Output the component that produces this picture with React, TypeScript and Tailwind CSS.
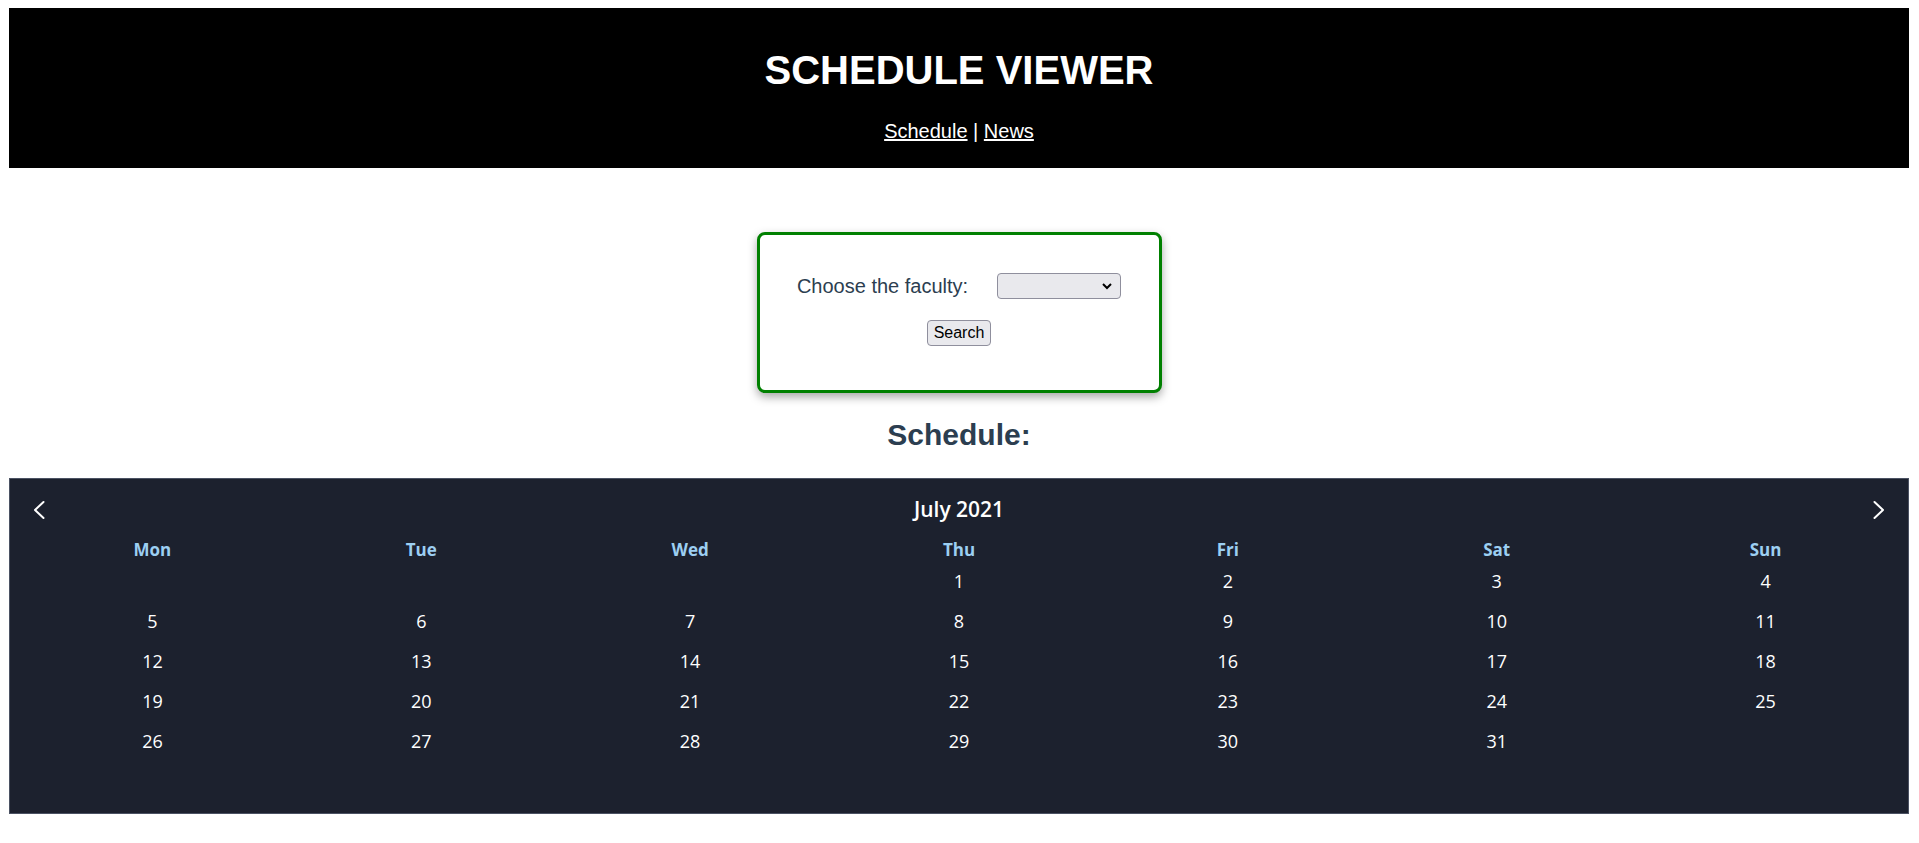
import React from "react"

const days = ["Mon", "Tue", "Wed", "Thu", "Fri", "Sat", "Sun"]

// July 2021 starts on a Thursday
const cells: (number | null)[] = [
  null, null, null,
  ...Array.from({ length: 31 }, (_, i) => i + 1),
]
while (cells.length < 42) cells.push(null)

function Chevron({ dir }: { dir: "left" | "right" }) {
  return (
    <svg width="14" height="20" viewBox="0 0 14 20" fill="none">
      <polyline
        points={dir === "left" ? "11.5,2 3,10 11.5,18" : "2.5,2 11,10 2.5,18"}
        stroke="white"
        strokeWidth="2"
        strokeLinecap="round"
        strokeLinejoin="round"
      />
    </svg>
  )
}

export default function App() {
  return (
    <div className="min-h-[843px] bg-white pt-[8px] pl-[9px] pr-[10px] font-['Liberation_Sans',Arial,sans-serif]">
      {/* Header */}
      <header className="h-[160px] bg-black flex flex-col items-center pt-[39px] text-white">
        <h1 className="text-[40px] leading-[46px] font-bold">SCHEDULE VIEWER</h1>
        <nav className="mt-[27px] text-[20px] leading-[23px]">
          <a href="#" className="underline">Schedule</a>
          <span> | </span>
          <a href="#" className="underline">News</a>
        </nav>
      </header>

      {/* Search form */}
      <div className="flex justify-center mt-[64px]">
        <div className="w-[405px] border-[3px] border-[#008000] rounded-[8px] bg-white shadow-[0_4px_10px_rgba(0,0,0,0.35)] pt-[38px] pb-[44px] flex flex-col items-center">
          <div className="h-[26px] flex items-center gap-[29px]">
            <label className="text-[20px] text-[#2c3e50]">Choose the faculty:</label>
            <div className="relative w-[124px] h-[26px]">
              <select className="appearance-none w-full h-full bg-[#e9e9ed] border border-[#8f8f9d] rounded-[4px]" />
              <svg className="absolute right-[8px] top-[9px] pointer-events-none" width="12" height="8" viewBox="0 0 12 8" fill="none">
                <polyline points="2,2 6,6 10,2" stroke="black" strokeWidth="2" />
              </svg>
            </div>
          </div>
          <button className="mt-[21px] h-[26px] px-[6px] bg-[#e9e9ed] border border-[#8f8f9d] rounded-[4px] text-[16px] text-black leading-none">
            Search
          </button>
        </div>
      </div>

      <h2 className="mt-[25px] text-center text-[30px] leading-[34px] font-bold text-[#2c3e50]">Schedule:</h2>

      {/* Calendar */}
      <div className="mt-[26px] bg-[#1c212e] border border-[#4b5263] pt-[15px] pb-[12px] px-[8px] font-['Open_Sans',sans-serif] text-white">
        <div className="h-[32px] flex items-center justify-between px-[14px]">
          <Chevron dir="left" />
          <span className="text-[21px] font-semibold">July 2021</span>
          <Chevron dir="right" />
        </div>
        <div className="mt-[11px] grid grid-cols-7 h-[24px] items-center">
          {days.map((d) => (
            <div key={d} className="text-center text-[17px] font-bold text-[#9ccff2]">{d}</div>
          ))}
        </div>
        <div className="grid grid-cols-7">
          {cells.map((n, i) => (
            <div key={i} className="h-[40px] flex items-center justify-center text-[18px]">
              {n ?? ""}
            </div>
          ))}
        </div>
      </div>
    </div>
  )
}
